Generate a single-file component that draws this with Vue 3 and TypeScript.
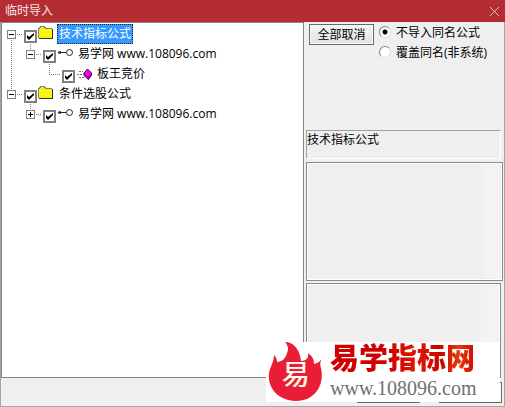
<script setup lang="ts">
import { ref } from 'vue'

type Guide = 'none' | 'line' | 'elbow' | 'open' | 'closed'
interface TreeRow {
  id: string
  label: string
  icon: 'folder' | 'key' | 'gem'
  guides: { kind: Guide; up: boolean; down: boolean }[]
  checked: boolean
}

const rows = ref<TreeRow[]>([
  { id: 'tech', label: '技术指标公式', icon: 'folder', checked: true, guides: [{ kind: 'open', up: false, down: true }] },
  {
    id: 'tech-site', label: '易学网 www.108096.com', icon: 'key', checked: true,
    guides: [{ kind: 'line', up: true, down: true }, { kind: 'open', up: true, down: false }],
  },
  {
    id: 'tech-item', label: '板王竞价', icon: 'gem', checked: true,
    guides: [{ kind: 'line', up: true, down: true }, { kind: 'none', up: false, down: false }, { kind: 'elbow', up: true, down: false }],
  },
  { id: 'pick', label: '条件选股公式', icon: 'folder', checked: true, guides: [{ kind: 'open', up: true, down: false }] },
  {
    id: 'pick-site', label: '易学网 www.108096.com', icon: 'key', checked: true,
    guides: [{ kind: 'none', up: false, down: false }, { kind: 'closed', up: true, down: false }],
  },
])
const selected = ref('tech')
const mode = ref('skip')
</script>

<template>
  <main class="window">
    <header class="title">
      <h1>临时导入</h1>
      <button class="close" type="button" aria-label="关闭">
        <svg width="11" height="11" viewBox="0 0 11 11"><path d="M1 1L10 10M10 1L1 10" stroke="#e6b9ba" fill="none" /></svg>
      </button>
    </header>

    <div class="body">
      <ul class="tree">
        <li v-for="row in rows" :key="row.id" class="row">
          <svg v-for="(g, i) in row.guides" :key="i" class="guide" width="19" height="20" viewBox="0 0 19 20" shape-rendering="crispEdges">
            <g stroke="#808080" stroke-dasharray="1 1" fill="none">
              <path v-if="g.up" d="M9.5 0V10" />
              <path v-if="g.down" d="M9.5 10V20" />
              <path v-if="g.kind !== 'line' && g.kind !== 'none'" d="M9 10.5H21" />
            </g>
            <g v-if="g.kind === 'open' || g.kind === 'closed'">
              <rect x="5.5" y="6.5" width="8" height="8" fill="#fff" stroke="#808080" />
              <path d="M7 10.5H12" stroke="#000" />
              <path v-if="g.kind === 'closed'" d="M9.5 8V13" stroke="#000" />
            </g>
          </svg>
          <input :id="row.id" v-model="row.checked" class="check" type="checkbox" />
          <svg v-if="row.icon === 'folder'" class="icon" width="16" height="16" viewBox="0 0 16 16" shape-rendering="crispEdges">
            <path d="M1 5H2V3H7V5H14V14H1Z" fill="#f8f400" />
            <path d="M0.5 14V4.5H1.5V3.5H2.5V2.5H6.5V3.5H7.5V4.5H14" fill="none" stroke="#808080" />
            <path d="M2 6.5H13M2 10.5H13" stroke="#fff860" stroke-dasharray="1 1" />
            <path d="M1 14.5H15M14.5 5V15" stroke="#303030" fill="none" />
          </svg>
          <svg v-else-if="row.icon === 'key'" class="icon" width="16" height="16" viewBox="0 0 16 16">
            <circle cx="12.5" cy="8.5" r="3" fill="#fff" stroke="#222" />
            <path d="M1 8.5H9" stroke="#222" />
            <path d="M1.5 7.5H4M1.5 9.5H4" stroke="#666" />
          </svg>
          <svg v-else class="icon" width="16" height="16" viewBox="0 0 16 16">
            <path d="M3 7.5H7M1 10.5H6M3 13.5H8" stroke="#777" stroke-dasharray="2 1" />
            <path d="M11.5 5L15.5 9V11L12.5 15.5L8 11.5V9Z" fill="#f0f" stroke="#300030" />
            <path d="M8 10L12 13L15.5 9.5M12 13V15" fill="none" stroke="#900090" />
          </svg>
          <label class="name" :class="{ selected: selected === row.id }" :for="row.id" @click="selected = row.id">{{ row.label }}</label>
        </li>
      </ul>

      <aside class="side">
        <div class="controls">
          <button class="push" type="button">全部取消</button>
          <div class="options" role="radiogroup">
            <label><input v-model="mode" type="radio" name="mode" value="skip" />不导入同名公式</label>
            <label><input v-model="mode" type="radio" name="mode" value="cover" />覆盖同名(非系统)</label>
          </div>
        </div>
        <div class="caption">技术指标公式</div>
        <div class="pane wide"><div class="track"></div></div>
        <div class="pane rest"><div class="track"></div></div>
      </aside>
    </div>

    <footer class="foot">
      <button class="push" type="button" aria-label="确定"></button>
      <button class="push" type="button" aria-label="取消"></button>
    </footer>

    <div class="brand">
      <div class="flame">
        <svg width="60" height="60" viewBox="0 0 60 60">
          <path d="M19 0C27 0 34 7 35 19C40 19 43 16 42 11C46 14 48 17 48 22C52 21 55 19 56 15C54 21 54 22 55 26C59 44 48 59 30 59C12 59 1 45 3 31C4 25 8 20 8 13C10 15 11 17 11 20C16 20 20 16 21 11C23 7 22 3 19 0Z" fill="#e91e36" />
        </svg>
        <span>易</span>
      </div>
      <div class="words">
        <strong>易学指标网</strong>
        <span>www.108096.com</span>
      </div>
    </div>
  </main>
</template>

<style>
body {
  margin: 0;
}
</style>

<style scoped>
.window {
  position: relative;
  box-sizing: border-box;
  min-height: 100vh;
  display: flex;
  flex-direction: column;
  background: #efefef;
  color: #000;
  font: 12px/20px "Open Sans", "Noto Sans CJK SC", sans-serif;
}
.title {
  display: flex;
  align-items: center;
  justify-content: space-between;
  height: 22px;
  padding: 0 5px;
  background: #b32d32;
  color: #f8e4e4;
}
h1 {
  margin: 0;
  font-size: 12px;
  font-weight: 400;
}
.close {
  display: flex;
  padding: 0;
  border: 0;
  background: none;
}
.body {
  flex: 1;
  display: grid;
  grid-template-columns: 1fr 200px;
  border: solid #a5a5a5;
  border-width: 0 1px;
}
.tree {
  margin: 0;
  padding: 1px 0;
  list-style: none;
  background: #fff;
  border: 1px solid #858585;
}
.row {
  display: flex;
  height: 20px;
}
.guide {
  overflow: visible;
  flex: none;
}
input {
  appearance: none;
  box-sizing: border-box;
  flex: none;
  margin: 0;
}
.check {
  width: 13px;
  height: 13px;
  margin: 6px 1px 0 3px;
  border: 2px solid #808080;
  background: #fff;
}
.check:checked {
  background: #fff url("data:image/svg+xml,%3Csvg xmlns='http://www.w3.org/2000/svg' viewBox='0 0 9 9'%3E%3Cpath d='M1 3v3l2 2 5-5V1L3 5z'/%3E%3C/svg%3E");
}
.icon {
  flex: none;
  margin-right: 3px;
  overflow: visible;
}
.name {
  padding: 0 2px;
  white-space: nowrap;
}
.name.selected {
  background: #3399ff;
  color: #fff;
  outline: 1px dotted #402000;
  outline-offset: -1px;
}
.side {
  display: flex;
  flex-direction: column;
  padding-left: 2px;
}
.controls {
  display: flex;
  box-sizing: border-box;
  height: 108px;
  padding: 2px 0 0 3px;
  gap: 5px;
}
.push {
  box-sizing: border-box;
  width: 65px;
  height: 21px;
  padding: 0;
  border: 1px solid #686868;
  background: linear-gradient(#f4f4f4, #e2e2e2);
  box-shadow: inset 0 0 0 1px #fafafa;
  color: #000;
  font: inherit;
  line-height: 19px;
}
.options label {
  display: flex;
  gap: 5px;
  height: 20px;
  line-height: 18px;
  white-space: nowrap;
}
.options input {
  width: 12px;
  height: 12px;
  margin-top: 2px;
  border: 1px solid;
  border-color: #858585 #e0e0e0 #e0e0e0 #858585;
  border-radius: 50%;
  background: #fff;
}
.options input:checked {
  background: radial-gradient(circle, #000 2px, #fff 3px);
}
.caption {
  box-sizing: border-box;
  height: 29px;
  margin: 0 3px 3px 0;
  border: 1px solid;
  border-color: #a0a0a0 #fff #fff #a0a0a0;
  line-height: 18px;
}
.pane {
  box-sizing: border-box;
  display: flex;
  justify-content: flex-end;
  border: 1px solid #8a8a8a;
  box-shadow: inset 0 0 0 1px #fff;
  padding: 2px;
}
.wide {
  height: 119px;
  margin: 0 1px 2px 0;
}
.rest {
  flex: 1;
  margin-right: 3px;
}
.track {
  width: 17px;
  background: #f4f3f1;
}
.foot {
  display: flex;
  justify-content: flex-end;
  gap: 19px;
  box-sizing: border-box;
  height: 29px;
  padding: 4px 2px;
  border: solid #a5a5a5;
  border-width: 0 1px 1px;
}
.foot .push {
  width: 63px;
}
.brand {
  position: absolute;
  right: 5px;
  bottom: 5px;
  display: flex;
  gap: 4px;
  width: 234px;
  height: 60px;
  background: #fff;
}
.flame {
  display: grid;
  flex: none;
  width: 60px;
}
.flame > * {
  grid-area: 1 / 1;
}
.flame span {
  padding-top: 12px;
  text-align: center;
  color: #fff;
  font-size: 28px;
  line-height: 40px;
  text-shadow: -1px 0 #f0a050;
}
.words {
  display: flex;
  flex-direction: column;
}
.words strong {
  padding-bottom: 4px;
  font: 900 29px/28px "Noto Sans CJK SC", sans-serif;
  color: transparent;
  background: linear-gradient(90deg, #d00000 40%, #e01800 60%, #cc0000 75%, #e83808 88%, #d00800);
  background-clip: text;
}
.words span {
  color: #707070;
  font: 20px/28px "Liberation Serif", serif;
}
</style>
